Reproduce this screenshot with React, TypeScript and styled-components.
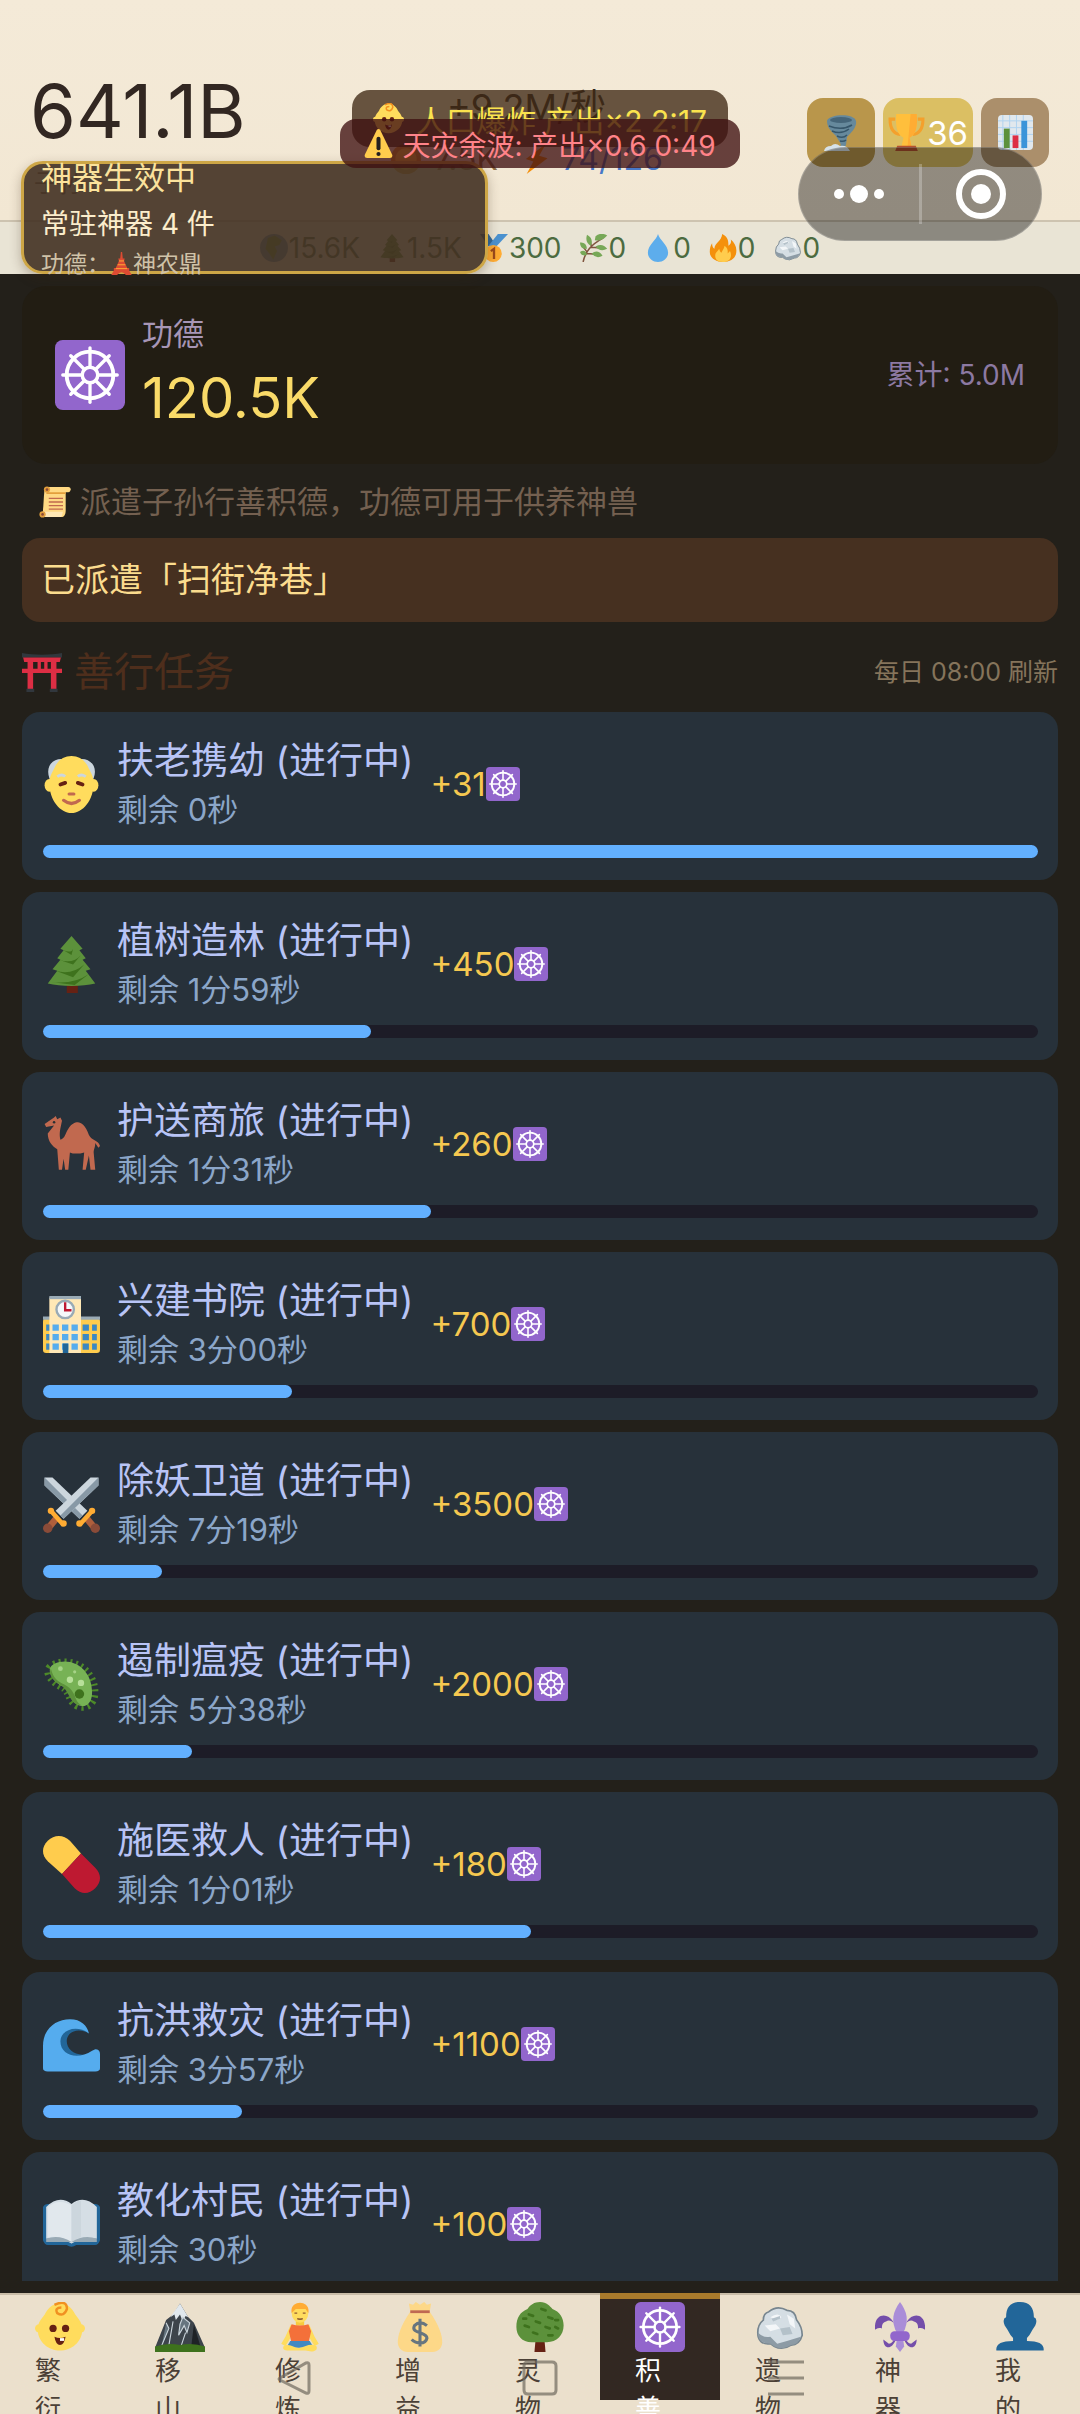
import React from 'react';
import styled, { createGlobalStyle } from 'styled-components';

const GlobalStyle = createGlobalStyle`
  * { box-sizing: border-box; }
  html, body { margin: 0; background: #23201a; }
  body, button { font-family: Inter, "Noto Sans CJK SC", sans-serif; font-weight: 400; }
  button { border: 0; padding: 0; margin: 0; background: none; color: inherit; }
  h1, h2, h3, p, ul { margin: 0; padding: 0; font-weight: 400; }
  ul { list-style: none; }
`;

/* ---------- icons, drawn on a 36 unit grid ---------- */

const spokes = [0, 45, 90, 135, 180, 225, 270, 315];

const icons: Record<string, React.ReactNode> = {
  dharma: (
    <>
      <rect width="36" height="36" rx="4" fill="#9266cc" />
      <g fill="none" stroke="#fff">
        <circle cx="18" cy="18" r="12" strokeWidth="2" />
        <circle cx="18" cy="18" r="4" strokeWidth="1.8" />
        {spokes.map((a) => (
          <path key={a} d="M18 14V4" strokeWidth="1.7" strokeLinecap="round" transform={`rotate(${a} 18 18)`} />
        ))}
      </g>
    </>
  ),
  scroll: (
    <>
      <path d="M6 5h24v23c0 4-2 7-5 7H4z" fill="#ffd983" />
      <path d="M8 1h25c4 0 3 6 0 6H9z" fill="#ffd983" />
      <path d="M9 7h21v2H8z" fill="#e39f3d" />
      <circle cx="9" cy="4" r="3.5" fill="#e39f3d" />
      <circle cx="9" cy="4" r="1.5" fill="#8a4b38" />
      <path d="M4 29h23c-1 3-1 6-3 6H4z" fill="#ffe8b6" />
      <circle cx="4" cy="32" r="3.5" fill="#e39f3d" />
      <circle cx="4" cy="32" r="1.5" fill="#8a4b38" />
      <path d="M11 14h16M11 18h16M11 22h16M11 26h16" stroke="#c1694f" strokeWidth="1.5" />
    </>
  ),
  torii: (
    <>
      <path d="M0 1c10 2 26 2 36 0v4H0z" fill="#31373d" />
      <path d="M1 5h34l-1 4H2zM0 15h36v4H0z" fill="#dd2e44" />
      <path d="M5 8h5v27H5zM26 8h5v27h-5zM14 8h3v8h-3zM20 8h3v8h-3z" fill="#dd2e44" />
      <path d="M4 33h7v3H4zM25 33h7v3h-7z" fill="#31373d" />
    </>
  ),
  oldman: (
    <>
      <path d="M4 14C1 5 8 1 13 2h10c6-1 12 4 9 12l-3 4H7z" fill="#ccd6dd" />
      <ellipse cx="4" cy="18.500" rx="3" ry="4" fill="#ffdc5d" />
      <ellipse cx="32" cy="18.500" rx="3" ry="4" fill="#ffdc5d" />
      <path d="M7 8C9 3 13 0 18 0s9 3 11 8c1 2 3 5 3 9 0 11-7 19-14 19S4 28 4 17c0-4 2-7 3-9z" fill="#ffdc5d" />
      <path d="M9 13q3-2 5 0M27 13q-3-2-5 0" fill="none" stroke="#ccd6dd" strokeWidth="1.800" />
      <path d="M11 18l3-1M25 18l-3-1" stroke="#662113" strokeWidth="2.400" strokeLinecap="round" />
      <path d="M16.500 24h3" stroke="#c1694f" strokeWidth="2" strokeLinecap="round" />
      <path d="M13 28q5 4 10 0" fill="none" stroke="#c1694f" strokeWidth="2" strokeLinecap="round" />
    </>
  ),
  pine: (
    <>
      <path d="M15 28h7v8h-7z" fill="#662113" />
      <path d="M18 0l7 8-2 1 4 5-2 1 5 6-3 1 6 8c-8 2-22 2-30 0l6-8-3-1 5-6-2-1 4-5-2-1z" fill="#5c913b" />
      <path d="M13 9q5 2 6-1l-1 4zM10 15q9 3 14-3l-5 6zM8 22q10 3 18-4l-7 8zM5 29q14 2 24-5l-9 7z" fill="#3e721d" />
    </>
  ),
  camel: (
    <>
      <path d="M1 5l6-4 1-1 1 2 2-1 1 2c-1 5-2 8-1 12 3-1 3-4 5-7s4-4 6-4 5 2 7 8c2 4 6 3 7 7l-1 1-2-3c0 3-1 4-1 6l1 11h-3l-1-9-2 9h-2l1-11c-3 1-7 1-9 0l-1 11h-2l-1-7-1 7h-2l-1-13c-3-2-6-5-6-10L7 6 2 7z" fill="#c1694f" />
      <circle cx="7" cy="4" r=".8" fill="#292f33" />
    </>
  ),
  school: (
    <>
      <rect y="14" width="36" height="22" rx="2" fill="#ffcc4d" />
      <path d="M0 13h36v2H0z" fill="#99aab5" />
      <path d="M4 1h20v35H4z" fill="#ffe8b6" />
      <path d="M4 0h20v2H4z" fill="#99aab5" />
      <circle cx="14" cy="8.500" r="5.500" fill="#f5f8fa" stroke="#99aab5" strokeWidth="1.500" />
      <path d="M14 4v5h4" fill="none" stroke="#be1931" strokeWidth="1.500" />
      {[18, 24, 30].map((y) => (
        <g key={y}>
          <path d={`M6 ${y}h4v4H6zM12 ${y}h4v4h-4zM18 ${y}h4v4h-4z`} fill="#55acee" />
          <path d={`M2 ${y}h2v4H2zM25 ${y}h4v4h-4zM31 ${y}h3v4h-3z`} fill="#3b88c3" />
        </g>
      ))}
      <path d="M12.500 30h3.500v6h-3.500z" fill="#226699" />
    </>
  ),
  swords: (
    <>
      {[false, true].map((flip) => (
        <g key={String(flip)} transform={flip ? 'translate(36 0) scale(-1 1)' : undefined}>
          <path d="M1 1h5l22 21-5 5L1 6z" fill="#ccd6dd" />
          <path d="M1 1l24 24-2 2L1 6z" fill="#8899a6" />
          <path d="M25 27l3-3 5 6-3 3z" fill="#af5f3c" />
          <path d="M22 30l8-9 2 2-8 9z" fill="#ffac33" />
          <circle cx="23" cy="30" r="2" fill="#ffac33" />
          <circle cx="31" cy="22" r="2" fill="#ffac33" />
          <circle cx="33" cy="33" r="3" fill="#8a4b38" />
        </g>
      ))}
    </>
  ),
  microbe: (
    <>
      <path d="M7 6C18 1 32 9 32 23c0 7-5 10-10 8-6-3-4-9-10-12S0 9 7 6z" fill="none" stroke="#4d8a28" strokeWidth="6" strokeDasharray="1.200 2.200" />
      <path d="M7 5C18 0 31 8 31 23c0 7-4 10-9 8-6-3-4-9-10-12S1 8 7 5z" fill="#77b255" />
      <path d="M5 8C8 20 16 15 20 25c1 3 2 5 4 6-7 0-7-8-12-12C7 16 3 12 5 8z" fill="#5c913b" />
      <circle cx="17" cy="15" r="2" fill="#b8e09a" />
      <circle cx="24" cy="17" r="2" fill="#b8e09a" />
      <circle cx="11" cy="8" r="1.500" fill="#a6d388" />
      <circle cx="20" cy="10" r="1" fill="#a6d388" />
      <circle cx="23" cy="24" r="3" fill="#3e721d" />
    </>
  ),
  pill: (
    <>
      <path d="M3 3c4-4 10-4 14 0l7 8-12 13-9-8C-1 12-1 7 3 3z" fill="#ffcc4d" />
      <path d="M24 11l9 9c4 4 4 9 0 13s-9 4-13 0l-8-9z" fill="#be1931" />
    </>
  ),
  wave: (
    <>
      <path d="M29 11C21 3 10 9 10 17c0 9 10 13 20 8l2-2C22 27 15 22 15 16c0-6 7-9 14-5z" fill="#226699" />
      <path d="M0 33V19C0 8 8 2 17 2c7 0 11 4 12 9C21 5 11 9 11 16c0 9 11 12 20 6l2-1q3 0 3 3v9q0 2-3 2H3q-3 0-3-2z" fill="#55acee" />
    </>
  ),
  book: (
    <>
      <path d="M0 7q1-2 3-2h30q2 0 3 2v21q-1 3-3 3H21q-3 2-6 0H3q-2 0-3-3z" fill="#226699" />
      <path d="M2 27V7q8-8 16-2 8-6 16 2v20q-9-1-16 3-7-4-16-3z" fill="#d5dee5" />
      <path d="M3 26V7q7-6 15-1v23q-7-4-15-3z" fill="#e1e8ed" />
      <path d="M18 6q3-3 6-3v23q-4 1-6 4z" fill="#ccd6dd" />
      <path d="M2 27q8-3 16 2 8-5 16-2v2H2z" fill="#99aab5" />
    </>
  ),
  baby: (
    <>
      <circle cx="3" cy="19" r="3" fill="#ffdc5d" />
      <circle cx="33" cy="19" r="3" fill="#ffdc5d" />
      <path d="M18 1c6 0 9 4 11 8 3 4 5 6 5 11 0 9-8 15-16 15S2 29 2 20c0-5 2-7 5-11 2-4 5-8 11-8z" fill="#ffdc5d" />
      <path d="M14 2q9-4 9 3-2 6-7 3-2-4 3-4" fill="none" stroke="#f19020" strokeWidth="1.800" />
      <circle cx="13" cy="19" r="2.600" fill="#662113" />
      <circle cx="22" cy="19" r="2.600" fill="#662113" />
      <path d="M14 25q4 2 8 0-1 6-4 6t-4-6z" fill="#662113" />
      <path d="M18 26h3v2h-3z" fill="#fff" />
    </>
  ),
  mountain: (
    <>
      <path d="M0 33L8 13l5-4 5-8 6 10 4 4 8 18z" fill="#3d444b" />
      <path d="M18 1l6 10-2-1-2 4-2-5-3 4-1-4-3 2z" fill="#e1e8ed" />
      <path d="M8 15l2 4-5 12M20 11l5 4-2 7-2-5-4 7 1-8zM13 14l-3 17M22 22l-3 9" fill="#66757f" stroke="#ccd6dd" strokeWidth=".8" />
      <path d="M28 16l5 17h-7z" fill="#1e2226" />
      <path d="M0 32q9-3 18-1 9-2 18 1v4H0z" fill="#3e721d" />
    </>
  ),
  meditate: (
    <>
      <path d="M15 11h6v6h-6z" fill="#f7ca3e" />
      <ellipse cx="18" cy="8" rx="6" ry="7" fill="#ffdc5d" />
      <path d="M12 8c-2-10 14-10 12 0l-2-3h-7z" fill="#ffac33" />
      <path d="M14 8h2M20 8h2M16 12q2 1 4 0" stroke="#915a34" strokeWidth="1" />
      <path d="M13 17L9 26l-3 5M23 17l4 9 3 5" fill="none" stroke="#ffdc5d" strokeWidth="3.500" />
      <path d="M12 16q6 2 12 0l2 5-2 9H12l-2-9z" fill="#f4703a" />
      <path d="M11 28h14l3 5H8z" fill="#4289c1" />
      <path d="M6 32c5-3 8 2 12 1s8-4 12-1c1 4-4 4-8 3h-9c-4 0-8 0-7-3z" fill="#ffdc5d" />
    </>
  ),
  money: (
    <>
      <path d="M11 7h14c7 10 9 17 9 22 0 4-3 7-7 7H9c-4 0-7-3-7-7 0-5 2-12 9-22z" fill="#fdd888" />
      <path d="M10 1l3 1 2-2 3 2 3-2 2 2 3-1-1 6H11z" fill="#fdd888" />
      <path d="M11 6h14v2H11z" fill="#bf6952" />
      <path d="M23 17q-5-4-9 0c-3 6 9 4 9 9-1 5-8 4-11 1M18 12v20" fill="none" stroke="#67757f" strokeWidth="2.200" />
    </>
  ),
  tree: (
    <>
      <path d="M15 25h6l1 11h-8z" fill="#662113" />
      <path d="M18 0c5 0 7 3 9 5 5 2 8 6 8 12 0 7-5 12-12 12H12C5 29 1 24 1 18 1 11 4 7 9 5c2-3 5-5 9-5z" fill="#5c913b" />
      <path d="M10 9l3 1M19 5l3 1M24 11l3 1M15 14l3 1M7 17l3 1M22 18l3 1M29 18l2 1M13 22l3 1M24 24l3 0M6 12l2 0M29 13l2 0" stroke="#3e721d" strokeWidth="2" strokeLinecap="round" />
    </>
  ),
  rock: (
    <>
      <path d="M2 22q0-6 4-9 0-5 4-6 6-5 13-1 6 0 7 7 4 5 4 11-2 7-8 7-6 4-12 1l-3-2q-9 1-9-8z" fill="#d5dee4" stroke="#78868f" strokeWidth="1.200" />
      <path d="M2 22q4 4 9 3l5 5 7-2 10-3q-2 6-7 6-6 4-12 1l-3-2q-9 0-9-8z" fill="#8d9ba5" />
      <path d="M11 11q6-4 8 0l-3 2zM7 17l8-1 3 3-7 2zM23 9l5 3 1 7-4-3z" fill="#f3f6f8" />
      <path d="M12 12l6-2 0 2-5 2zM18 19l7-1 2 5-7 1z" fill="#b4c1c9" />
    </>
  ),
  fleur: (
    <>
      <path d="M15 20c0-5-4-8-7-6-3 1-3 3-3 5-3-1-5 1-5 1-1-12 9-13 13-6l3 6zM21 20c0-5 4-8 7-6 3 1 3 3 3 5 3-1 5 1 5 1 1-12-9-13-13-6l-3 6z" fill="#744eaa" />
      <path d="M18 0c5 7 7 13 2 23h-4C11 13 13 7 18 0z" fill="#aa8dd8" />
      <path d="M15 27c-3 8-9 7-9 0l4 3c2 0 3-2 4-3zM21 27c3 8 9 7 9 0l-4 3c-2 0-3-2-4-3z" fill="#744eaa" />
      <path d="M16 25h4l1 7-3 4-3-4z" fill="#aa8dd8" />
      <rect x="11" y="21" width="14" height="7" rx="3" fill="#9266cc" />
    </>
  ),
  bust: (
    <path d="M18 0c7 0 10 4 10 11q3 1 1 6l-2 3q-2 4-4 6v2q13 0 12 7H1q-1-7 12-7v-2q-2-2-4-6l-2-3q-2-5 1-6C8 4 11 0 18 0z" fill="#226699" />
  ),
  tornado: (
    <>
      <path d="M4 6c2-7 27-8 29 0 1 6-4 11-9 16l-1 8q-2 4-6 3 2-4-1-7-2-5-7-9Q4 12 4 6z" fill="#66899c" />
      <ellipse cx="18" cy="5" rx="11" ry="3" fill="#456579" />
      <path d="M6 11q13 5 23-1M9 16q9 4 17-2M14 21q6 3 10-1M17 26q4 1 6-1" fill="none" stroke="#36566a" strokeWidth="1.500" />
      <path d="M1 36q1-5 7-5 4-4 9 0 7-1 10 5z" fill="#d7e2e8" />
    </>
  ),
  trophy: (
    <>
      <path d="M7 5H2c0 9 3 14 10 15M29 5h5c0 9-3 14-10 15" fill="none" stroke="#f4a02c" strokeWidth="3" />
      <path d="M8 0h20c1 13-1 20-7 23l2 9H13l2-9C9 20 7 13 8 0z" fill="#ffbf3c" />
      <path d="M22 0h6c1 13-1 20-7 23l2 9h-4z" fill="#ffac33" />
      <path d="M9 31h18l2 5H7z" fill="#b5522f" />
    </>
  ),
  chart: (
    <>
      <rect width="36" height="36" rx="4" fill="#e1e8ed" />
      <path d="M5 0v36M12 0v36M19 0v36M26 0v36M0 6h36M0 13h36M0 20h36M0 27h36" stroke="#afd3ef" strokeWidth="1" />
      <path d="M6 14h6v20H6z" fill="#5c913b" />
      <path d="M15 21h6v13h-6z" fill="#dd2e44" />
      <path d="M24 6h6v28h-6z" fill="#3b94d9" />
    </>
  ),
  globe: (
    <>
      <circle cx="18" cy="18" r="18" fill="#5c8fae" />
      <path d="M10 5l9-3 9 6-3 6-6 2 3 6-5 11-5-8-5-6 2-8z" fill="#5c913b" />
    </>
  ),
  medal: (
    <>
      <path d="M0 0h11l8 12-8 4z" fill="#2f6799" />
      <path d="M36 0H23L11 15l9 2z" fill="#4a91cf" />
      <circle cx="17" cy="25" r="11" fill="#ffac33" />
      <path d="M14 22l4-3v13" fill="none" stroke="#9c4a1c" strokeWidth="3" />
    </>
  ),
  herb: (
    <>
      <path d="M4 36C7 22 14 14 30 5M9 23l-7-9M15 17L12 6M8 25l14 1M14 17l14 1" fill="none" stroke="#80553f" strokeWidth="2" />
      <path d="M0 11q8-1 9 8-9 1-9-8zM9 1q9 5 5 14-8-4-5-14zM20 3q7-6 15-1-7 8-16 6zM15 25q8-6 14 3-8 5-14-3zM20 16q9-5 15 3-9 5-15-3zM0 23q7-4 9 4-7 2-9-4z" fill="#77a857" />
    </>
  ),
  drop: <path d="M18 0c2 8 13 14 13 24 0 7-6 12-13 12S5 31 5 24C5 14 16 8 18 0z" fill="#5dadec" />,
  fire: (
    <>
      <path d="M17 0c8 4 8 10 8 15 3-2 4-5 3-8 5 4 8 10 7 17-1 8-8 12-17 12S1 31 1 23c0-5 1-8 3-11 0 4 1 6 3 7 0-8 9-9 10-19z" fill="#f4900c" />
      <path d="M8 28c0-5 4-6 5-9 1 2 1 4 3 5 2-4 4-7 4-9 5 3 4 8 4 10l3-3c3 6 1 14-9 14-8 0-10-4-10-8z" fill="#ffcc4d" />
    </>
  ),
  warning: (
    <>
      <path d="M16 1q2-2 4 0l15 31q1 4-3 4H4q-4 0-3-4z" fill="#ffcc4d" />
      <path d="M18 12v12" stroke="#231f20" strokeWidth="5" strokeLinecap="round" />
      <circle cx="18" cy="31" r="2.600" fill="#231f20" />
    </>
  ),
  tower: (
    <>
      <path d="M17 0h2l1 10h3l-1 4 5 11h3v4l4 7h-9q-7-9-14 0H2l4-7v-4h3l5-11-1-4h3z" fill="#dd4b32" />
      <path d="M14 14h8M9 26h18M12 20h12" stroke="#ffac33" strokeWidth="1.500" />
    </>
  ),
  bolt: <path d="M31 0L7 18l9 3-8 15 25-19-10-3z" fill="#f4900c" />,
  coin: (
    <>
      <circle cx="18" cy="18" r="17" fill="#e0a13c" />
      <circle cx="18" cy="18" r="12" fill="#ffcc4d" />
    </>
  ),
};

const Glyph = styled.svg<{ $size: number }>`
  display: block;
  flex: none;
  width: ${(p) => p.$size}px;
  height: ${(p) => p.$size}px;
`;

const Icon = ({ name, size }: { name: string; size: number }) => (
  <Glyph $size={size} viewBox="0 0 36 36" aria-hidden="true">
    {icons[name]}
  </Glyph>
);

/* ---------- page ---------- */

const Page = styled.div`
  position: relative;
  display: flex;
  flex-direction: column;
  height: 100vh;
  overflow: hidden;
  background: #23201a;
  white-space: nowrap;
`;

const Header = styled.header`
  flex: none;
  display: flex;
  align-items: center;
  justify-content: space-between;
  padding: 60px 31px 15px 30px;
  background: linear-gradient(#f4ead8, #f2e7d3);
  border-bottom: 2px solid #cdc3b0;
  color: #322722;
`;

const Population = styled.h1`
  font-size: 74px;
  line-height: 102px;
`;

const PopulationLabel = styled.p`
  padding-left: 4px;
  font-size: 25px;
  line-height: 43px;
  color: #75604f;
`;

const Rates = styled.div`
  display: flex;
  flex-direction: column;
  align-items: center;
`;

const Rate = styled.p`
  font-size: 36px;
  line-height: 52px;
`;

const Stocks = styled.div`
  display: flex;
  gap: 22px;
  font-size: 32px;
  line-height: 52px;
`;

const Stock = styled.span<{ $color: string }>`
  display: flex;
  align-items: center;
  gap: 12px;
  color: ${(p) => p.$color};
`;

const Tools = styled.div`
  display: flex;
  gap: 8px;
`;

const Tool = styled.button<{ $color: string }>`
  display: flex;
  align-items: center;
  justify-content: center;
  gap: 2px;
  min-width: 68px;
  height: 69px;
  padding: 0 5px;
  border-radius: 16px;
  background: ${(p) => p.$color};
  color: #fff;
  font-size: 33px;
`;

const Resources = styled.div`
  flex: none;
  display: flex;
  justify-content: center;
  gap: 18px;
  background: #e9e4d5;
  color: #4c6b40;
  font-size: 28px;
  line-height: 52px;
`;

const Resource = styled.span`
  display: flex;
  align-items: center;
  gap: 1px;
`;

const Main = styled.main`
  flex: 1;
  min-height: 0;
  display: flex;
  flex-direction: column;
  padding: 12px 22px;
`;

const Merit = styled.section`
  flex: none;
  display: flex;
  align-items: center;
  gap: 17px;
  padding: 25px 33px;
  border-radius: 24px;
  background: #221d13;
`;

const MeritFigures = styled.div`
  flex: 1;
`;

const MeritLabel = styled.h2`
  font-size: 31px;
  line-height: 46px;
  color: #a796b6;
`;

const MeritValue = styled.p`
  font-size: 56px;
  line-height: 82px;
  color: #f9da68;
`;

const MeritTotal = styled.p`
  font-size: 28px;
  line-height: 46px;
  color: #8c79a2;
`;

const Hint = styled.p`
  flex: none;
  display: flex;
  align-items: center;
  gap: 9px;
  margin: 15px 17px 13px;
  font-size: 31px;
  line-height: 46px;
  color: #746050;
`;

const Toast = styled.p`
  flex: none;
  padding: 16px 19px;
  border-radius: 18px;
  background: #463020;
  font-size: 34px;
  line-height: 52px;
  color: #fbdc8e;
`;

const SectionHead = styled.div`
  flex: none;
  display: flex;
  align-items: center;
  justify-content: space-between;
  margin: 27px 0 17px;
`;

const SectionTitle = styled.h2`
  display: flex;
  align-items: center;
  gap: 12px;
  font-size: 40px;
  line-height: 46px;
  color: #4e2e1c;
`;

const Refresh = styled.span`
  font-size: 25px;
  line-height: 34px;
  color: #85745b;
`;

const TaskList = styled.ul`
  flex: 1;
  min-height: 0;
  display: flex;
  flex-direction: column;
  gap: 12px;
  overflow: hidden;
`;

const Task = styled.li`
  flex: none;
  padding: 23px 20px 22px 21px;
  border-radius: 18px;
  background: #27313a;
`;

const TaskRow = styled.div`
  display: flex;
  align-items: center;
  gap: 17px;
`;

const TaskTitle = styled.h3`
  font-size: 37px;
  line-height: 52px;
  color: #b8c4f6;
`;

const TaskTime = styled.p`
  font-size: 31px;
  line-height: 46px;
  color: #8ba6c9;
`;

const Reward = styled.span`
  display: flex;
  align-items: center;
  font-size: 33px;
  color: #f5c850;
`;

const Track = styled.div`
  margin-top: 12px;
  height: 13px;
  border-radius: 7px;
  background: #1d1c27;
`;

const Fill = styled.div`
  height: 100%;
  border-radius: 7px;
  background: #62b0ff;
`;

const Nav = styled.nav`
  flex: none;
  display: flex;
  align-items: flex-start;
  height: 121px;
  overflow: hidden;
  background: #ebe0cc;
  box-shadow: inset 0 2px 0 #c9bda8;
`;

const NavItem = styled.button<{ $active?: boolean }>`
  flex: 1;
  display: flex;
  flex-direction: column;
  align-items: center;
  height: 107px;
  padding-top: 3px;
  border-top: 6px solid ${(p) => (p.$active ? '#a97b2c' : 'transparent')};
  background: ${(p) => (p.$active ? '#322822' : 'transparent')};
  background-clip: padding-box;
  color: ${(p) => (p.$active ? '#fff' : '#4b4036')};
`;

const NavLabel = styled.span`
  width: 50px;
  font-size: 26px;
  line-height: 38px;
  text-align: left;
  white-space: normal;
`;

/* ---------- layers over the page ---------- */

const Artifacts = styled.aside`
  position: absolute;
  top: 161px;
  left: 21px;
  display: flex;
  flex-direction: column;
  justify-content: center;
  width: 467px;
  height: 113px;
  padding-left: 17px;
  border: 3px solid #cda646;
  border-radius: 22px;
  background: rgba(66, 49, 34, 0.9);
  box-shadow: 0 4px 12px rgba(60, 40, 20, 0.3);
`;

const ArtifactsTitle = styled.h2`
  font-size: 31px;
  line-height: 46px;
  color: #fbe29c;
`;

const ArtifactsCount = styled.p`
  font-size: 28px;
  line-height: 46px;
  color: #fbedcb;
`;

const ArtifactsLine = styled.p`
  display: flex;
  align-items: center;
  font-size: 23px;
  line-height: 34px;
  color: #cfc2a8;
`;

const Effects = styled.div`
  position: absolute;
  top: 90px;
  left: 0;
  right: 0;
  display: flex;
  flex-direction: column;
  align-items: center;
  pointer-events: none;
`;

const Boost = styled.p`
  display: flex;
  align-items: center;
  gap: 12px;
  height: 57px;
  padding: 0 21px;
  border-radius: 18px;
  background: rgba(63, 41, 20, 0.78);
  font-size: 30px;
  color: #fae34e;
`;

const Penalty = styled.p`
  display: flex;
  align-items: center;
  gap: 9px;
  height: 49px;
  margin-top: -28px;
  padding: 0 24px;
  border-radius: 16px;
  background: rgba(63, 17, 17, 0.78);
  font-size: 28px;
  color: #ff8389;
`;

const Capsule = styled.div`
  position: absolute;
  top: 147px;
  right: 38px;
  display: flex;
  align-items: center;
  width: 244px;
  height: 94px;
  border: 1px solid rgba(255, 255, 255, 0.2);
  border-radius: 47px;
  background: rgba(0, 0, 0, 0.4);
`;

const CapsuleButton = styled.button`
  flex: 1;
  display: flex;
  align-items: center;
  justify-content: center;
`;

const CapsuleRule = styled.span`
  width: 3px;
  height: 60px;
  background: rgba(255, 255, 255, 0.25);
`;

const SystemKeys = styled.div`
  position: absolute;
  bottom: 18px;
  left: 276px;
  right: 276px;
  display: flex;
  justify-content: space-between;
`;

const tasks = [
  { icon: 'oldman', title: '扶老携幼', left: '0秒', reward: 31, done: 100 },
  { icon: 'pine', title: '植树造林', left: '1分59秒', reward: 450, done: 33 },
  { icon: 'camel', title: '护送商旅', left: '1分31秒', reward: 260, done: 39 },
  { icon: 'school', title: '兴建书院', left: '3分00秒', reward: 700, done: 25 },
  { icon: 'swords', title: '除妖卫道', left: '7分19秒', reward: 3500, done: 12 },
  { icon: 'microbe', title: '遏制瘟疫', left: '5分38秒', reward: 2000, done: 15 },
  { icon: 'pill', title: '施医救人', left: '1分01秒', reward: 180, done: 49 },
  { icon: 'wave', title: '抗洪救灾', left: '3分57秒', reward: 1100, done: 20 },
  { icon: 'book', title: '教化村民', left: '30秒', reward: 100, done: 50 },
];

const resources = [
  ['globe', '15.6K'],
  ['pine', '1.5K'],
  ['medal', '300'],
  ['herb', '0'],
  ['drop', '0'],
  ['fire', '0'],
  ['rock', '0'],
];

const tabs = [
  ['baby', '繁衍'],
  ['mountain', '移山'],
  ['meditate', '修炼'],
  ['money', '增益'],
  ['tree', '灵物'],
  ['dharma', '积善'],
  ['rock', '遗物'],
  ['fleur', '神器'],
  ['bust', '我的'],
];

const keys = [
  ['返回', 'M4 18L30 3q3-1 3 2v26q0 3-3 2L4 20q-2-1 0-2z'],
  ['主屏幕', 'M6 2h24q4 0 4 4v24q0 4-4 4H6q-4 0-4-4V6q0-4 4-4z'],
  ['最近任务', 'M0 2h36M0 18h36M0 34h36'],
];

export default function App() {
  return (
    <Page>
      <GlobalStyle />
      <Header>
        <div>
          <Population>641.1B</Population>
          <PopulationLabel>子孙</PopulationLabel>
        </div>
        <Rates>
          <Rate>+9.2M/秒</Rate>
          <Stocks>
            <Stock $color="#8d6f46"><Icon name="coin" size={32} />7.5K</Stock>
            <Stock $color="#4878c8"><Icon name="bolt" size={30} />74/126</Stock>
          </Stocks>
        </Rates>
        <Tools>
          <Tool $color="#b9964b" aria-label="天灾"><Icon name="tornado" size={36} /></Tool>
          <Tool $color="#dbbf63"><Icon name="trophy" size={37} />36</Tool>
          <Tool $color="#ab8f6b" aria-label="统计"><Icon name="chart" size={35} /></Tool>
        </Tools>
      </Header>

      <Resources>
        {resources.map(([icon, amount]) => (
          <Resource key={icon}><Icon name={icon} size={28} />{amount}</Resource>
        ))}
      </Resources>

      <Main>
        <Merit>
          <Icon name="dharma" size={70} />
          <MeritFigures>
            <MeritLabel>功德</MeritLabel>
            <MeritValue>120.5K</MeritValue>
          </MeritFigures>
          <MeritTotal>累计: 5.0M</MeritTotal>
        </Merit>
        <Hint><Icon name="scroll" size={32} />派遣子孙行善积德，功德可用于供养神兽</Hint>
        <Toast role="status">已派遣「扫街净巷」</Toast>
        <SectionHead>
          <SectionTitle><Icon name="torii" size={40} />善行任务</SectionTitle>
          <Refresh>每日 08:00 刷新</Refresh>
        </SectionHead>
        <TaskList>
          {tasks.map((task) => (
            <Task key={task.title}>
              <TaskRow>
                <Icon name={task.icon} size={57} />
                <div>
                  <TaskTitle>{task.title} (进行中)</TaskTitle>
                  <TaskTime>剩余 {task.left}</TaskTime>
                </div>
                <Reward>+{task.reward}<Icon name="dharma" size={34} /></Reward>
              </TaskRow>
              <Track role="progressbar" aria-label={task.title} aria-valuenow={task.done}>
                <Fill style={{ width: `${task.done}%` }} />
              </Track>
            </Task>
          ))}
        </TaskList>
      </Main>

      <Nav>
        {tabs.map(([icon, label]) => (
          <NavItem key={label} $active={label === '积善'}>
            <Icon name={icon} size={50} />
            <NavLabel>{label}</NavLabel>
          </NavItem>
        ))}
      </Nav>

      <Artifacts>
        <ArtifactsTitle>神器生效中</ArtifactsTitle>
        <ArtifactsCount>常驻神器 4 件</ArtifactsCount>
        <ArtifactsLine>功德：<Icon name="tower" size={23} />神农鼎</ArtifactsLine>
      </Artifacts>

      <Effects>
        <Boost><Icon name="baby" size={31} />人口爆炸 产出×2 2:17</Boost>
        <Penalty><Icon name="warning" size={29} />天灾余波: 产出×0.6 0:49</Penalty>
      </Effects>

      <Capsule>
        <CapsuleButton aria-label="更多">
          <svg width="52" height="20" viewBox="0 0 52 20" fill="#fff" aria-hidden="true">
            <circle cx="6" cy="10" r="5" />
            <circle cx="26" cy="10" r="9" />
            <circle cx="46" cy="10" r="5" />
          </svg>
        </CapsuleButton>
        <CapsuleRule />
        <CapsuleButton aria-label="关闭">
          <svg width="52" height="52" viewBox="0 0 52 52" aria-hidden="true">
            <circle cx="26" cy="26" r="22" fill="none" stroke="#fff" strokeWidth="6" />
            <circle cx="26" cy="26" r="10" fill="#fff" />
          </svg>
        </CapsuleButton>
      </Capsule>

      <SystemKeys>
        {keys.map(([label, d]) => (
          <button key={label} aria-label={label}>
            <Glyph $size={36} viewBox="0 0 36 36" aria-hidden="true">
              <path d={d} fill="none" stroke="#6f695e" strokeOpacity=".7" strokeWidth="3" />
            </Glyph>
          </button>
        ))}
      </SystemKeys>
    </Page>
  );
}
